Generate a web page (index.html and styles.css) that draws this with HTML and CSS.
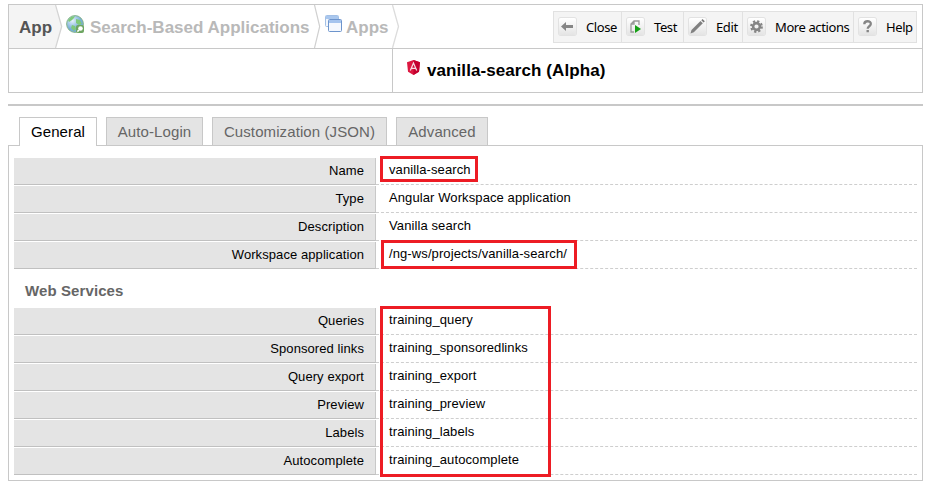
FILE: index.html
```html
<!DOCTYPE html>
<html lang="en">
<head>
<meta charset="utf-8">
<title>vanilla-search (Alpha)</title>
<link rel="stylesheet" href="styles.css">
</head>
<body>
<header class="header">
  <div class="header-top">
    <nav class="crumbs">
      <div class="crumb crumb-root">App</div>
      <svg class="chevron" width="8" height="43" viewBox="0 0 8 43"><path d="M0 0 6.5 21.5 0 43z" fill="#f4f4f4"/><path d="M0.5 0 6.7 21.5 0.5 43" fill="none" stroke="#d4d4d4" stroke-width="1.3"/></svg>
      <div class="crumb crumb-search">
        <svg width="20" height="20" viewBox="0 0 20 20">
          <defs><radialGradient id="sea" cx=".35" cy=".3"><stop offset="0" stop-color="#e6f3fb"/><stop offset="1" stop-color="#78add8"/></radialGradient></defs>
          <circle cx="9" cy="9" r="8.4" fill="url(#sea)" stroke="#86b58a" stroke-width="1"/>
          <path d="M2 5 5 2 9 1 8 3 6 5 3 7zM10 4l4 1 2 4-3 1-3-2zM6 10l3 1 1 3-2 2-3-3z" fill="#7fc97a"/>
          <rect x="10" y="10" width="8" height="8" rx="2" fill="#6da561"/>
          <circle cx="14.5" cy="13.500" r="2.3" fill="#fff"/><path d="m13 15-1.600 1.600" stroke="#fff" stroke-width="1.500"/>
        </svg>
        <span>Search-Based Applications</span>
      </div>
      <svg class="chevron" width="8" height="43" viewBox="0 0 8 43"><path d="M0.5 0 5.700 21.500 0.500 43" fill="none" stroke="#d0d0d0" stroke-width="1.200"/></svg>
      <div class="crumb crumb-apps">
        <svg width="18" height="18" viewBox="0 0 18 18">
          <rect x=".5" y=".5" width="13" height="11" rx="1" fill="#f3f7fd" stroke="#a3c0e6"/><path d="M1 1h12v3H1z" fill="#a9c7ee"/>
          <rect x="3.500" y="4.500" width="13" height="12" rx="1" fill="#f4f8fe" stroke="#6d94cc"/><path d="M4 5h12v3H4z" fill="#a5c4ee"/>
        </svg>
        <span>Apps</span>
      </div>
      <svg class="chevron" width="8" height="43" viewBox="0 0 8 43"><path d="M0.500 0 6.500 21.500 0.500 43" fill="none" stroke="#dcdcdc" stroke-width="1.300"/></svg>
    </nav>
    <div class="toolbar">
      <div class="tool close"><svg class="ico" viewBox="0 0 17 17"><path d="M2 8.500 7 4v3h7v3H7v3z" fill="#858585"/></svg><span>Close</span></div>
      <div class="tool test"><svg class="ico" viewBox="0 0 17 17"><path d="M7 14H4V6l3-3h5v4M4 6h3V3" fill="none" stroke="#999" stroke-width="1.300"/><path d="M8 7v8l6-4z" fill="#15a015"/></svg><span>Test</span></div>
      <div class="tool edit"><svg class="ico" viewBox="0 0 17 17"><path d="m1.500 15.500 1-3.500 9-9 2.300 2.300-9 9z" fill="#808080"/><path d="m12.300 2.200 1.200-1.200 2.300 2.300-1.200 1.200z" fill="#777"/></svg><span>Edit</span></div>
      <div class="tool more"><svg class="ico" viewBox="0 0 17 17"><circle cx="8.500" cy="8.500" r="3.400" fill="none" stroke="#858585" stroke-width="2.600"/><circle cx="8.500" cy="8.500" r="5.300" fill="none" stroke="#858585" stroke-width="2.200" stroke-dasharray="2.200 1.963"/></svg><span>More actions</span></div>
      <div class="tool help"><svg class="ico" viewBox="0 0 17 17"><path d="M5.300 6.200C5.300 2.200 12 2.400 11.800 6c0 2.200-3.100 2.300-3.100 4.700" fill="none" stroke="#858585" stroke-width="2.300"/><path d="M7.500 12h2.400v2.200H7.500z" fill="#858585"/></svg><span>Help</span></div>
    </div>
  </div>
  <div class="header-bottom">
    <div class="blank"></div>
    <h1 class="title">
      <svg width="13" height="15" viewBox="0 0 13 15"><path d="M6.500 0 13 2.200 12 11.800 6.500 15 1 11.800 0 2.200z" fill="#dd1740"/><path d="M6.500 0 13 2.200 12 11.800 6.500 15z" fill="#c3002f"/><path d="M3.300 10.500 6.500 3l3.200 7.500M4.600 8.300h3.800" fill="none" stroke="#f5dce2" stroke-width="1.200"/></svg>
      <span>vanilla-search (Alpha)</span>
    </h1>
  </div>
</header>
<div class="rule"></div>
<div class="tabs">
  <div class="tab tab-general active">General</div>
  <div class="tab tab-login">Auto-Login</div>
  <div class="tab tab-custom">Customization (JSON)</div>
  <div class="tab tab-advanced">Advanced</div>
</div>
<main class="panel">
  <div class="rows">
    <div class="row"><div class="label">Name</div><div class="value">vanilla-search</div></div>
    <div class="row"><div class="label">Type</div><div class="value">Angular Workspace application</div></div>
    <div class="row"><div class="label">Description</div><div class="value">Vanilla search</div></div>
    <div class="row"><div class="label">Workspace application</div><div class="value">/ng-ws/projects/vanilla-search/</div></div>
    <div class="mark mark-name"></div>
    <div class="mark mark-path"></div>
  </div>
  <h2 class="section">Web Services</h2>
  <div class="rows">
    <div class="row"><div class="label">Queries</div><div class="value">training_query</div></div>
    <div class="row"><div class="label">Sponsored links</div><div class="value">training_sponsoredlinks</div></div>
    <div class="row"><div class="label">Query export</div><div class="value">training_export</div></div>
    <div class="row"><div class="label">Preview</div><div class="value">training_preview</div></div>
    <div class="row"><div class="label">Labels</div><div class="value">training_labels</div></div>
    <div class="row"><div class="label">Autocomplete</div><div class="value">training_autocomplete</div></div>
    <div class="mark mark-services"></div>
  </div>
</main>
</body>
</html>
```
FILE: styles.css
```css
* { box-sizing: border-box; }
body {
  margin: 0;
  padding: 4px 7px 0 8px;
  background: #fff;
  color: #000;
  font: 13px "Liberation Sans", Arial, sans-serif;
}
h1, h2 { margin: 0; }
.header { height: 89px; border: 1px solid #c8c8c8; }
.header-top { display: flex; justify-content: space-between; height: 43px; }
.crumbs { display: flex; font-size: 17px; font-weight: bold; line-height: 20px; color: #b9b9b9; }
.crumb { display: flex; padding-top: 13px; white-space: nowrap; }
.crumb-root { width: 46px; padding-left: 10px; background: #f4f4f4; color: #555; }
.chevron { display: block; flex: none; }
.crumb-search { width: 251px; padding-left: 3px; }
.crumb-search svg { margin: -3px 4px 0 0; flex: none; }
.crumb-apps { width: 70px; padding-left: 3px; }
.crumb-apps svg { margin: -3px 3px 0 0; flex: none; }
.toolbar {
  display: flex;
  height: 32px;
  margin: 6px 5px 0 0;
  border: 1px solid #e1e1e1;
  background: #f4f4f4;
  font: 13px "Noto Sans", sans-serif;
  line-height: 30px;
  letter-spacing: -0.4px;
}
.tool { display: flex; padding: 0 0 0 5px; border-left: 1px solid #e1e1e1; white-space: nowrap; }
.tool:first-child { border-left: 0; }
.close { width: 67px; }
.test { width: 62px; }
.edit { width: 59px; }
.more { width: 111px; }
.help { width: 63px; }
.ico {
  flex: none;
  width: 17px;
  height: 17px;
  margin: 6px 10px 0 0;
  border-radius: 2px;
  background: linear-gradient(#fff, #e4e4e4);
  box-shadow: 0 0 0 1px #e2e2e2;
}
.header-bottom { display: flex; height: 44px; border-top: 1px solid #c8c8c8; }
.blank { width: 383px; }
.title {
  display: flex;
  flex: 1;
  padding: 11px 0 0 14px;
  border-left: 1px solid #c8c8c8;
  font-size: 17px;
  line-height: 21px;
  letter-spacing: 0.08px;
}
.title svg { margin-right: 7px; }
.rule { height: 2px; margin-top: 11px; background: #c8c8c8; }
.tabs { display: flex; gap: 9px; margin-top: 11px; padding-left: 11px; }
.tab {
  height: 28px;
  border: 1px solid #c8c8c8;
  border-bottom: 0;
  background: #e4e4e4;
  color: #666;
  font-size: 15px;
  line-height: 28px;
  letter-spacing: 0.1px;
  text-align: center;
  white-space: nowrap;
}
.active { height: 29px; margin-bottom: -1px; position: relative; background: #fff; color: #000; }
.tab-general { width: 78px; }
.tab-login { width: 97px; }
.tab-custom { width: 175px; }
.tab-advanced { width: 92px; }
.panel { height: 336px; padding: 11px 5px 0; border: 1px solid #c8c8c8; }
.rows { position: relative; }
.row { display: flex; height: 28px; padding-top: 1px; }
.label {
  width: 362px;
  height: 27px;
  padding-right: 11px;
  border-right: 1px solid #c8c8c8;
  border-bottom: 1px solid #c0c0c0;
  background: #e4e4e4;
  line-height: 25px;
  letter-spacing: 0.08px;
  text-align: right;
}
.value {
  flex: 1;
  height: 27px;
  padding-left: 13px;
  border-bottom: 1px dashed #cecece;
  line-height: 24px;
  letter-spacing: 0.1px;
}
.section {
  height: 38px;
  padding: 12px 0 0 11px;
  color: #666;
  font-size: 15px;
  line-height: 20px;
  letter-spacing: 0.1px;
}
.mark { position: absolute; border: 3px solid #ed1c24; }
.mark-name { left: 366px; top: -1px; width: 98px; height: 26px; }
.mark-path { left: 367px; top: 83px; width: 196px; height: 29px; }
.mark-services { left: 366px; top: -1px; width: 171px; height: 171px; }
```
